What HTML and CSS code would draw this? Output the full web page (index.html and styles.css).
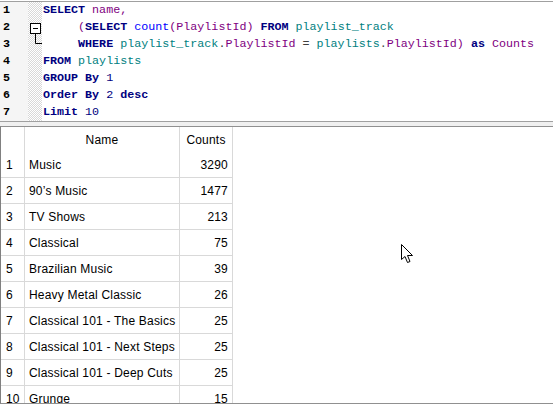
FILE: index.html
```html
<!DOCTYPE html>
<html>
<head>
<meta charset="utf-8">
<link rel="stylesheet" href="styles.css">
</head>
<body>
<div class="editor">
  <div class="linenos">
    <div>1</div><div>2</div><div>3</div><div>4</div><div>5</div><div>6</div><div>7</div>
  </div>
  <div class="fold">
    <svg width="14" height="119" viewBox="0 0 14 119">
      <rect x="2.5" y="21.5" width="10" height="10" fill="#fff" stroke="#000"/>
      <line x1="5" y1="26.5" x2="10" y2="26.5" stroke="#000"/>
      <polyline points="7.5,31.5 7.5,41.5 14,41.5" fill="none" stroke="#000"/>
    </svg>
  </div>
  <div class="code">
    <div class="ln"><b class="kw">SELECT</b> <span class="id">name</span><span class="id">,</span></div>
    <div class="ln">     <span class="id">(</span><b class="kw">SELECT</b> <span class="fn">count</span><span class="id">(PlaylistId)</span> <b class="kw">FROM</b> <span class="tb">playlist_track</span></div>
    <div class="ln">     <b class="kw">WHERE</b> <span class="tb">playlist_track</span><span class="op">.</span><span class="id">PlaylistId</span> <span class="op">=</span> <span class="tb">playlists</span><span class="op">.</span><span class="id">PlaylistId)</span> <b class="kw">as</b> <span class="id">Counts</span></div>
    <div class="ln"><b class="kw">FROM</b> <span class="tb">playlists</span></div>
    <div class="ln"><b class="kw">GROUP By</b> <span class="num">1</span></div>
    <div class="ln"><b class="kw">Order By</b> <span class="num">2</span> <b class="kw">desc</b></div>
    <div class="ln"><b class="kw">Limit</b> <span class="num">10</span></div>
  </div>
</div>
<div class="splitter"></div>
<div class="results">
  <div class="grid">
    <div class="h"></div><div class="h c">Name</div><div class="h c">Counts</div>
    <div class="rn">1</div><div class="nm">Music</div><div class="ct">3290</div>
    <div class="rn">2</div><div class="nm">90’s Music</div><div class="ct">1477</div>
    <div class="rn">3</div><div class="nm">TV Shows</div><div class="ct">213</div>
    <div class="rn">4</div><div class="nm">Classical</div><div class="ct">75</div>
    <div class="rn">5</div><div class="nm">Brazilian Music</div><div class="ct">39</div>
    <div class="rn">6</div><div class="nm">Heavy Metal Classic</div><div class="ct">26</div>
    <div class="rn">7</div><div class="nm">Classical 101 - The Basics</div><div class="ct">25</div>
    <div class="rn">8</div><div class="nm">Classical 101 - Next Steps</div><div class="ct">25</div>
    <div class="rn">9</div><div class="nm">Classical 101 - Deep Cuts</div><div class="ct">25</div>
    <div class="rn">10</div><div class="nm">Grunge</div><div class="ct">15</div>
  </div>
</div>
<svg class="cursor" width="13" height="20" viewBox="0 0 13 20">
  <path d="M0.5,0.5 L0.5,15.5 L4,12.5 L6.5,18.5 L9,17.5 L6.5,11.5 L11.5,11.5 Z" fill="#fff" stroke="#000" stroke-linejoin="miter"/>
</svg>
</body>
</html>
```
FILE: styles.css
```css
html, body {
  margin: 0;
  padding: 0;
  background: #fff;
}
body {
  position: relative;
  width: 553px;
  height: 406px;
  overflow: hidden;
}
.editor {
  margin-top: 1px;
  border-top: 1px solid #a0a0a0;
  border-bottom: 1px solid #a0a0a0;
  display: flex;
  height: 119px;
  background: #fff;
}
.linenos {
  width: 28px;
  background: #f5f5f5;
  font-family: "Liberation Mono", monospace;
  font-weight: bold;
  font-size: 11.7px;
  line-height: 17px;
  color: #000;
  padding-left: 3px;
  box-sizing: border-box;
}
.fold {
  width: 14px;
  background: repeating-conic-gradient(#d8d8d8 0 25%, #fff 0 50%) 0 0 / 2px 2px;
}
.fold svg {
  display: block;
}
.code {
  flex: 1;
  padding-left: 1px;
  font-family: "Liberation Mono", monospace;
  font-size: 11.7px;
  line-height: 17px;
  color: #000080;
}
.ln {
  height: 17px;
  white-space: pre;
}
.kw {
  color: #000080;
  font-weight: bold;
}
.fn {
  color: #0000ff;
}
.id {
  color: #800080;
}
.tb {
  color: #008080;
}
.op {
  color: #404040;
}
.num {
  color: #000080;
}
.splitter {
  height: 4px;
  background: #f0f0f0;
}
.results {
  border-top: 1px solid #909090;
  border-bottom: 1px solid #909090;
  border-left: 1px solid #808080;
  height: 276px;
  overflow: hidden;
}
.grid {
  display: grid;
  grid-template-columns: 24px 155px 53px;
  grid-template-rows: 25px;
  grid-auto-rows: 26px;
  font-family: "Liberation Sans", Arial, sans-serif;
  font-size: 12px;
  letter-spacing: 0.2px;
  color: #000;
}
.grid > div {
  box-sizing: border-box;
  border-right: 1px solid #d9d9d9;
  display: flex;
  align-items: center;
  white-space: nowrap;
}
.grid .c {
  justify-content: center;
}
.rn, .nm, .ct {
  border-bottom: 1px solid #d9d9d9;
  padding-top: 1px;
}
.rn {
  padding-left: 5px;
  letter-spacing: 0;
}
.nm {
  padding-left: 4px;
}
.ct {
  justify-content: flex-end;
  padding-right: 4px;
}
.cursor {
  position: absolute;
  left: 401px;
  top: 244px;
}
```
